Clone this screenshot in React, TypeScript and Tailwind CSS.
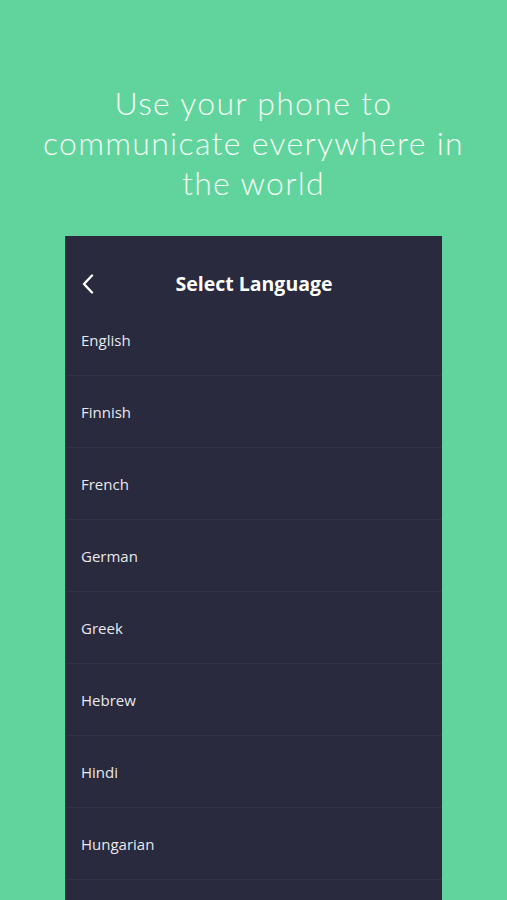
const languages = ['English', 'Finnish', 'French', 'German', 'Greek', 'Hebrew', 'Hindi', 'Hungarian', ''];

export default function App() {
  return (
    <div className="w-[507px] h-[900px] overflow-hidden bg-[#61d49d] flex flex-col items-center">
      <h1 className="mt-[83px] w-[507px] text-center text-[32px] leading-[40px] font-light tracking-[1.3px] text-[#f2fbf6] font-['Lato',sans-serif]">
        Use your phone to
        <br />
        communicate everywhere in
        <br />
        the world
      </h1>

      <div className="mt-[33px] w-[377px] flex-1 bg-[#292a3d] border-l border-[#3a3c52] font-['Open_Sans',sans-serif]">
        <div className="relative h-[68px] pt-[27px] flex items-center justify-center">
          <svg
            className="absolute left-[15px] top-[38px]"
            width="14"
            height="20"
            viewBox="0 0 14 20"
            fill="none"
            stroke="white"
            strokeWidth="2.4"
            strokeLinecap="round"
            strokeLinejoin="round"
          >
            <path d="M11 1.5 L3 10 L11 18.5" />
          </svg>
          <span className="text-white font-bold text-[19.5px]">Select Language</span>
        </div>

        {languages.map((lang, i) => (
          <div key={i} className="h-[72px] flex items-center px-[15px] pt-[1px] border-b border-[#323449]">
            <span className="text-[15px] text-[#e8e8ee]">{lang}</span>
          </div>
        ))}
      </div>
    </div>
  );
}
